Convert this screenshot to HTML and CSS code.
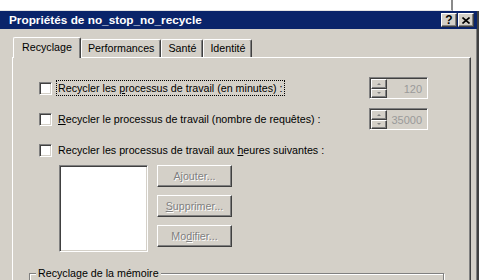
FILE: index.html
```html
<!DOCTYPE html>
<html lang="fr">
<head>
	<meta charset="UTF-8">
	<title>Propriétés de no_stop_no_recycle</title>
	<link rel="stylesheet" href="styles.css">
</head>
<body>
<div class="backdrop"></div>
<div class="window">
	<div class="titlebar">
		<span class="title">Propriétés de no_stop_no_recycle</span>
		<div class="caption-buttons">
			<span class="cap-btn help">?</span>
			<span class="cap-btn close">
				<svg width="8" height="7" viewBox="0 0 8 7">
					<path d="M0.5 0.5 L7.5 6.5 M7.5 0.5 L0.5 6.5" stroke="#000" stroke-width="1.6" fill="none"/>
				</svg>
			</span>
		</div>
	</div>
	<div class="client">
		<div class="tabs">
			<div class="tab active">Recyclage</div>
			<div class="tab">Performances</div>
			<div class="tab">Santé</div>
			<div class="tab">Identité</div>
		</div>
		<div class="panel">
			<div class="rows">
				<div class="row">
					<span class="check"></span>
					<span class="label focus">Recycler les <u>p</u>rocessus de travail (en minutes) :</span>
					<div class="spin">
						<div class="spin-arrows">
							<span class="spin-btn"><i class="arrow up"></i></span>
							<span class="spin-btn"><i class="arrow down"></i></span>
						</div>
						<span class="spin-value">120</span>
					</div>
				</div>
				<div class="row">
					<span class="check"></span>
					<span class="label"><u>R</u>ecycler le processus de travail (nombre de requêtes) :</span>
					<div class="spin">
						<div class="spin-arrows">
							<span class="spin-btn"><i class="arrow up"></i></span>
							<span class="spin-btn"><i class="arrow down"></i></span>
						</div>
						<span class="spin-value">35000</span>
					</div>
				</div>
				<div class="row">
					<span class="check"></span>
					<span class="label">Recycler les processus de travail aux <u>h</u>eures suivantes :</span>
				</div>
			</div>
			<div class="schedule">
				<div class="listbox"></div>
				<div class="buttons">
					<button class="btn" disabled>A<u>j</u>outer...</button>
					<button class="btn" disabled><u>S</u>upprimer...</button>
					<button class="btn" disabled>Mo<u>d</u>ifier...</button>
				</div>
			</div>
			<fieldset class="group">
				<legend>Recyclage de la mémoire</legend>
			</fieldset>
		</div>
	</div>
</div>
</body>
</html>
```

FILE: styles.css
```css
* {
	box-sizing: border-box;
}

body {
	margin: 0;
	width: 500px;
	height: 280px;
	overflow: hidden;
	background-color: #ffffff;
	font-family: "Liberation Sans", Arial, sans-serif;
	font-size: 10.7px;
	color: #000000;
}

.backdrop {
	width: 453px;
	height: 11px;
	border-right: 2px solid #8a8a8a;
	border-bottom: 1px solid #e4e4e4;
}

.window {
	width: 479px;
	height: 269px;
	overflow: hidden;
	background-color: #d4d0c8;
	border-right: 2px solid #404040;
	box-shadow: inset -1px 0 0 #808080;
}

.titlebar {
	display: flex;
	align-items: center;
	height: 18px;
	padding: 0 3px 0 9px;
	background-color: #0a246a;
}

.title {
	color: #ffffff;
	font-weight: bold;
	font-size: 11.8px;
}

.caption-buttons {
	display: flex;
	gap: 1px;
	margin-left: auto;
}

.cap-btn {
	display: flex;
	align-items: center;
	justify-content: center;
	width: 16px;
	height: 14px;
	background-color: #d4d0c8;
	border-top: 1px solid #ffffff;
	border-left: 1px solid #ffffff;
	border-right: 1px solid #404040;
	border-bottom: 1px solid #404040;
	box-shadow: inset -1px -1px 0 #808080;
	font-weight: bold;
	font-size: 12px;
	line-height: 1;
}

.client {
	padding: 8px 6px 0 12px;
}

.tabs {
	display: flex;
	align-items: flex-end;
	height: 20px;
	padding-left: 1px;
}

.tab {
	height: 18px;
	padding: 2px 6px 0 6px;
	border-top: 1px solid #ffffff;
	border-left: 1px solid #ffffff;
	border-right: 1px solid #404040;
	border-radius: 2px 2px 0 0;
	box-shadow: inset -1px 0 0 #808080;
	white-space: nowrap;
}

.tab.active {
	position: relative;
	z-index: 1;
	height: 21px;
	margin-bottom: -1px;
	padding: 3px 8px 0 8px;
	background-color: #d4d0c8;
}

.panel {
	height: 240px;
	padding-top: 19px;
	border-top: 1px solid #ffffff;
	border-left: 1px solid #ffffff;
	border-right: 1px solid #404040;
	box-shadow: inset -1px 0 0 #808080;
}

.rows {
	display: flex;
	flex-direction: column;
	gap: 9px;
	margin: 0 42px 0 26px;
}

.row {
	display: flex;
	align-items: center;
	height: 22px;
}

.check {
	width: 13px;
	height: 13px;
	margin-right: 4px;
	background-color: #ffffff;
	border-top: 1px solid #808080;
	border-left: 1px solid #808080;
	border-right: 1px solid #ffffff;
	border-bottom: 1px solid #ffffff;
	box-shadow: inset 1px 1px 0 #404040, inset -1px -1px 0 #d4d0c8;
}

.label {
	padding: 1px 1px;
	border: 1px dotted transparent;
	white-space: nowrap;
}

.label.focus {
	border-color: #000000;
}

.spin {
	display: flex;
	align-items: stretch;
	width: 59px;
	height: 22px;
	margin-left: auto;
	border-top: 1px solid #808080;
	border-left: 1px solid #808080;
	border-right: 1px solid #ffffff;
	border-bottom: 1px solid #ffffff;
	box-shadow: inset 1px 1px 0 #404040;
	padding: 1px 0 0 1px;
}

.spin-arrows {
	display: flex;
	flex-direction: column;
	width: 16px;
}

.spin-btn {
	display: flex;
	align-items: center;
	justify-content: center;
	flex: 1;
	border-top: 1px solid #ffffff;
	border-left: 1px solid #ffffff;
	border-right: 1px solid #404040;
	border-bottom: 1px solid #404040;
	box-shadow: inset -1px -1px 0 #808080;
}

.arrow {
	width: 0;
	height: 0;
	border-left: 2px solid transparent;
	border-right: 2px solid transparent;
}

.arrow.up {
	border-bottom: 2px solid #808080;
}

.arrow.down {
	border-top: 2px solid #808080;
}

.spin-value {
	flex: 1;
	align-self: center;
	padding-right: 5px;
	text-align: right;
	color: #9a9a9a;
	font-size: 11px;
}

.schedule {
	display: flex;
	gap: 9px;
	margin: 4px 0 0 46px;
}

.listbox {
	width: 89px;
	height: 87px;
	background-color: #ffffff;
	border-top: 1px solid #808080;
	border-left: 1px solid #808080;
	border-right: 1px solid #ffffff;
	border-bottom: 1px solid #ffffff;
	box-shadow: inset 1px 1px 0 #404040, inset -1px -1px 0 #d4d0c8;
}

.buttons {
	display: flex;
	flex-direction: column;
	gap: 8px;
}

.btn {
	width: 75px;
	height: 22px;
	padding: 0;
	font-family: inherit;
	font-size: inherit;
	color: #808080;
	text-shadow: 1px 1px 0 #ffffff;
	background-color: #d4d0c8;
	border-top: 1px solid #ffffff;
	border-left: 1px solid #ffffff;
	border-right: 1px solid #404040;
	border-bottom: 1px solid #404040;
	box-shadow: inset -1px -1px 0 #808080;
	appearance: none;
}

.group {
	height: 40px;
	margin: 15px 26px 0 16px;
	padding: 0 6px;
	border: 1px solid #808080;
	box-shadow: inset 1px 1px 0 #ffffff, 1px 1px 0 #ffffff;
}

.group legend {
	padding: 0 2px;
	line-height: 13px;
	background-color: #d4d0c8;
}
```
